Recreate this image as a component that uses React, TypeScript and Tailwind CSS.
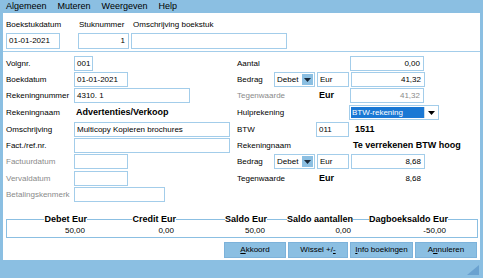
import React from "react";

const Box = ({ w, children, right, grey, className = "" }: { w: string; children?: React.ReactNode; right?: boolean; grey?: boolean; className?: string }) => (
  <div
    className={`${w} h-[15px] border border-[#a3cdea] bg-white flex items-center text-[8px] leading-none px-[2px] whitespace-nowrap ${right ? "justify-end pr-[3px]" : ""} ${grey ? "text-[#8a8a8a]" : "text-black"} ${className}`}
  >
    {children}
  </div>
);

const Arrow = ({ dark }: { dark?: boolean }) => (
  <svg width="7" height="4" viewBox="0 0 7 4">
    <polygon points="0,0 7,0 3.5,4" fill={dark ? "#1a2a3a" : "#000"} />
  </svg>
);

const DebetSelect = () => (
  <div className="w-[41px] h-[15px] border border-[#a3cdea] bg-white flex items-center text-[8px] leading-none pl-[2px] pr-[1px]">
    <span className="flex-1">Debet</span>
    <div className="w-[11px] h-[11px] bg-[#8bbfe2] flex items-center justify-center">
      <Arrow dark />
    </div>
  </div>
);

const LLabel = ({ children, grey }: { children: React.ReactNode; grey?: boolean }) => (
  <div className={`w-[68px] text-[8px] leading-none whitespace-nowrap ${grey ? "text-[#8a8a8a]" : "text-black"}`}>{children}</div>
);
const RLabel = ({ children, grey }: { children: React.ReactNode; grey?: boolean }) => (
  <div className={`w-[37px] text-[8px] leading-none whitespace-nowrap ${grey ? "text-[#8a8a8a]" : "text-black"}`}>{children}</div>
);

const Row = ({ h, left, right }: { h: string; left?: React.ReactNode; right?: React.ReactNode }) => (
  <div className={`${h} flex`}>
    <div className="w-[231px] flex items-start">
      <div className="h-[15px] flex items-center">{left}</div>
    </div>
    <div className="flex-1 flex items-start">{right}</div>
  </div>
);

export default function App() {
  const sumCols = [
    { w: "w-[80px]", h: "Debet Eur", v: "50,00" },
    { w: "w-[89px]", h: "Credit Eur", v: "0,00" },
    { w: "w-[91px]", h: "Saldo Eur", v: "50,00" },
    { w: "w-[86px]", h: "Saldo aantallen", v: "0,00" },
    { w: "w-[95px]", h: "Dagboeksaldo Eur", v: "-50,00" },
  ];
  return (
    <div className="w-[483px] h-[278px] bg-[#8bbfe2] flex flex-col font-['Liberation_Sans',Arial,sans-serif] text-black overflow-hidden">
      {/* menu */}
      <div className="h-[13px] flex items-center pl-[6px] gap-[11px] text-[9px] leading-none">
        <span>Algemeen</span>
        <span>Muteren</span>
        <span>Weergeven</span>
        <span>Help</span>
      </div>
      {/* panel */}
      <div className="ml-[3px] w-[477px] h-[247px] bg-white flex flex-col">
        {/* top section */}
        <div className="h-[39px] border-b border-[#a3cdea] flex pl-[3px]">
          <div className="w-[54px] flex flex-col">
            <div className="mt-[6px] h-[11px] text-[8px] leading-[11px]">Boekstukdatum</div>
            <Box w="w-[54px]" className="mt-[3px] h-[16px]">01-01-2021</Box>
          </div>
          <div className="ml-[18px] w-[51px] flex flex-col">
            <div className="mt-[6px] h-[11px] text-[8px] leading-[11px] pl-[1px]">Stuknummer</div>
            <Box w="w-[51px]" right className="mt-[3px] h-[16px]">1</Box>
          </div>
          <div className="ml-[2px] w-[156px] flex flex-col">
            <div className="mt-[6px] h-[11px] text-[8px] leading-[11px] pl-[2px] whitespace-nowrap">Omschrijving boekstuk</div>
            <Box w="w-[156px]" className="mt-[3px] h-[16px]"></Box>
          </div>
        </div>
        {/* body */}
        <div className="pt-[4px] pl-[3px] flex flex-col">
          <Row
            h="h-[16px]"
            left={<><LLabel>Volgnr.</LLabel><Box w="w-[19px]">001</Box></>}
            right={<div className="h-[15px] flex items-center"><RLabel>Aantal</RLabel><div className="w-[76px]" /><Box w="w-[74px]" right>0,00</Box></div>}
          />
          <Row
            h="h-[16px]"
            left={<><LLabel>Boekdatum</LLabel><Box w="w-[54px]">01-01-2021</Box></>}
            right={<div className="h-[15px] flex items-center"><RLabel>Bedrag</RLabel><DebetSelect /><Box w="w-[32px]" className="ml-[2px]">Eur</Box><Box w="w-[74px]" right className="ml-[2px]">41,32</Box></div>}
          />
          <Row
            h="h-[17px]"
            left={<><LLabel>Rekeningnummer</LLabel><Box w="w-[116px]">4310. 1</Box></>}
            right={<div className="h-[15px] flex items-center"><RLabel grey>Tegenwaarde</RLabel><div className="w-[76px] pl-[45px] text-[9px] font-bold leading-none">Eur</div><Box w="w-[74px]" right grey>41,32</Box></div>}
          />
          <Row
            h="h-[17px]"
            left={<><LLabel>Rekeningnaam</LLabel><div className="pl-[2px] text-[9px] font-bold leading-none whitespace-nowrap">Advertenties/Verkoop</div></>}
            right={
              <div className="h-[15px] flex items-center">
                <RLabel>Hulprekening</RLabel>
                <div className="w-[75px]" />
                <div className="w-[90px] h-[15px] border border-[#a3cdea] bg-white flex items-center p-[1px]">
                  <div className="w-[73px] h-full bg-[#1a78d4] text-white text-[8px] leading-none flex items-center pl-[1px]">BTW-rekening</div>
                  <div className="flex-1 h-full flex items-center justify-center border-l border-[#c8dcea]"><Arrow /></div>
                </div>
              </div>
            }
          />
          <Row
            h="h-[16px]"
            left={<><LLabel>Omschrijving</LLabel><Box w="w-[156px]">Multicopy Kopieren brochures</Box></>}
            right={<div className="h-[15px] flex items-center"><RLabel>BTW</RLabel><div className="w-[42px]" /><Box w="w-[33px]">011</Box><div className="pl-[6px] text-[9px] font-bold leading-none">1511</div></div>}
          />
          <Row
            h="h-[16px]"
            left={<><LLabel>Fact./ref.nr.</LLabel><Box w="w-[156px]"></Box></>}
            right={<div className="h-[15px] flex items-center"><RLabel>Rekeningnaam</RLabel><div className="w-[79px]" /><div className="text-[9px] font-bold leading-none whitespace-nowrap">Te verrekenen BTW hoog</div></div>}
          />
          <Row
            h="h-[17px]"
            left={<><LLabel grey>Factuurdatum</LLabel><Box w="w-[54px]"></Box></>}
            right={<div className="h-[15px] flex items-center"><RLabel>Bedrag</RLabel><DebetSelect /><Box w="w-[32px]" className="ml-[2px]">Eur</Box><Box w="w-[74px]" right className="ml-[2px]">8,68</Box></div>}
          />
          <Row
            h="h-[16px]"
            left={<><LLabel grey>Vervaldatum</LLabel><Box w="w-[54px]"></Box></>}
            right={<div className="h-[15px] flex items-center"><RLabel>Tegenwaarde</RLabel><div className="w-[76px] pl-[45px] text-[9px] font-bold leading-none">Eur</div><div className="w-[74px] text-right pr-[3px] text-[8px] leading-none">8,68</div></div>}
          />
          <Row
            h="h-[16px]"
            left={<><LLabel grey>Betalingskenmerk</LLabel><Box w="w-[91px]"></Box></>}
          />
        </div>
        {/* summary */}
        <div className="mt-[16px] ml-[3px] w-[472px] h-[19px] border border-[#8bbfe2] flex flex-col">
          <div className="-mt-[7px] h-[12px] flex">
            {sumCols.map((c) => (
              <div key={c.h} className={`${c.w} flex justify-end items-center`}>
                <span className="bg-white text-[9px] font-bold leading-none">{c.h}</span>
              </div>
            ))}
          </div>
          <div className="h-[12px] flex">
            {sumCols.map((c) => (
              <div key={c.h} className={`${c.w} flex justify-end items-center pr-[2px] text-[8px] leading-none`}>
                {c.v}
              </div>
            ))}
          </div>
        </div>
        {/* buttons */}
        <div className="mt-[4px] h-[16px] flex pl-[221px] gap-[2px] text-[8px] leading-none">
          <div className="w-[62px] h-[16px] bg-[#8bbfe2] border border-[#7cb2da] flex items-center justify-center"><span><span className="underline">A</span>kkoord</span></div>
          <div className="w-[60px] h-[16px] bg-[#8bbfe2] border border-[#7cb2da] flex items-center justify-center"><span>Wissel +/<span className="underline">-</span></span></div>
          <div className="w-[63px] h-[16px] bg-[#8bbfe2] border border-[#7cb2da] flex items-center justify-center"><span><span className="underline">I</span>nfo boekingen</span></div>
          <div className="w-[62px] h-[16px] bg-[#8bbfe2] border border-[#7cb2da] flex items-center justify-center"><span>A<span className="underline">n</span>nuleren</span></div>
        </div>
      </div>
      {/* bottom strip */}
      <div className="flex-1 flex justify-end items-start pr-[4px] pt-[5px]">
        <svg width="12" height="10" viewBox="0 0 12 10">
          <polygon points="12,0 12,10 0,10" fill="#6aa2d0" />
        </svg>
      </div>
    </div>
  );
}
